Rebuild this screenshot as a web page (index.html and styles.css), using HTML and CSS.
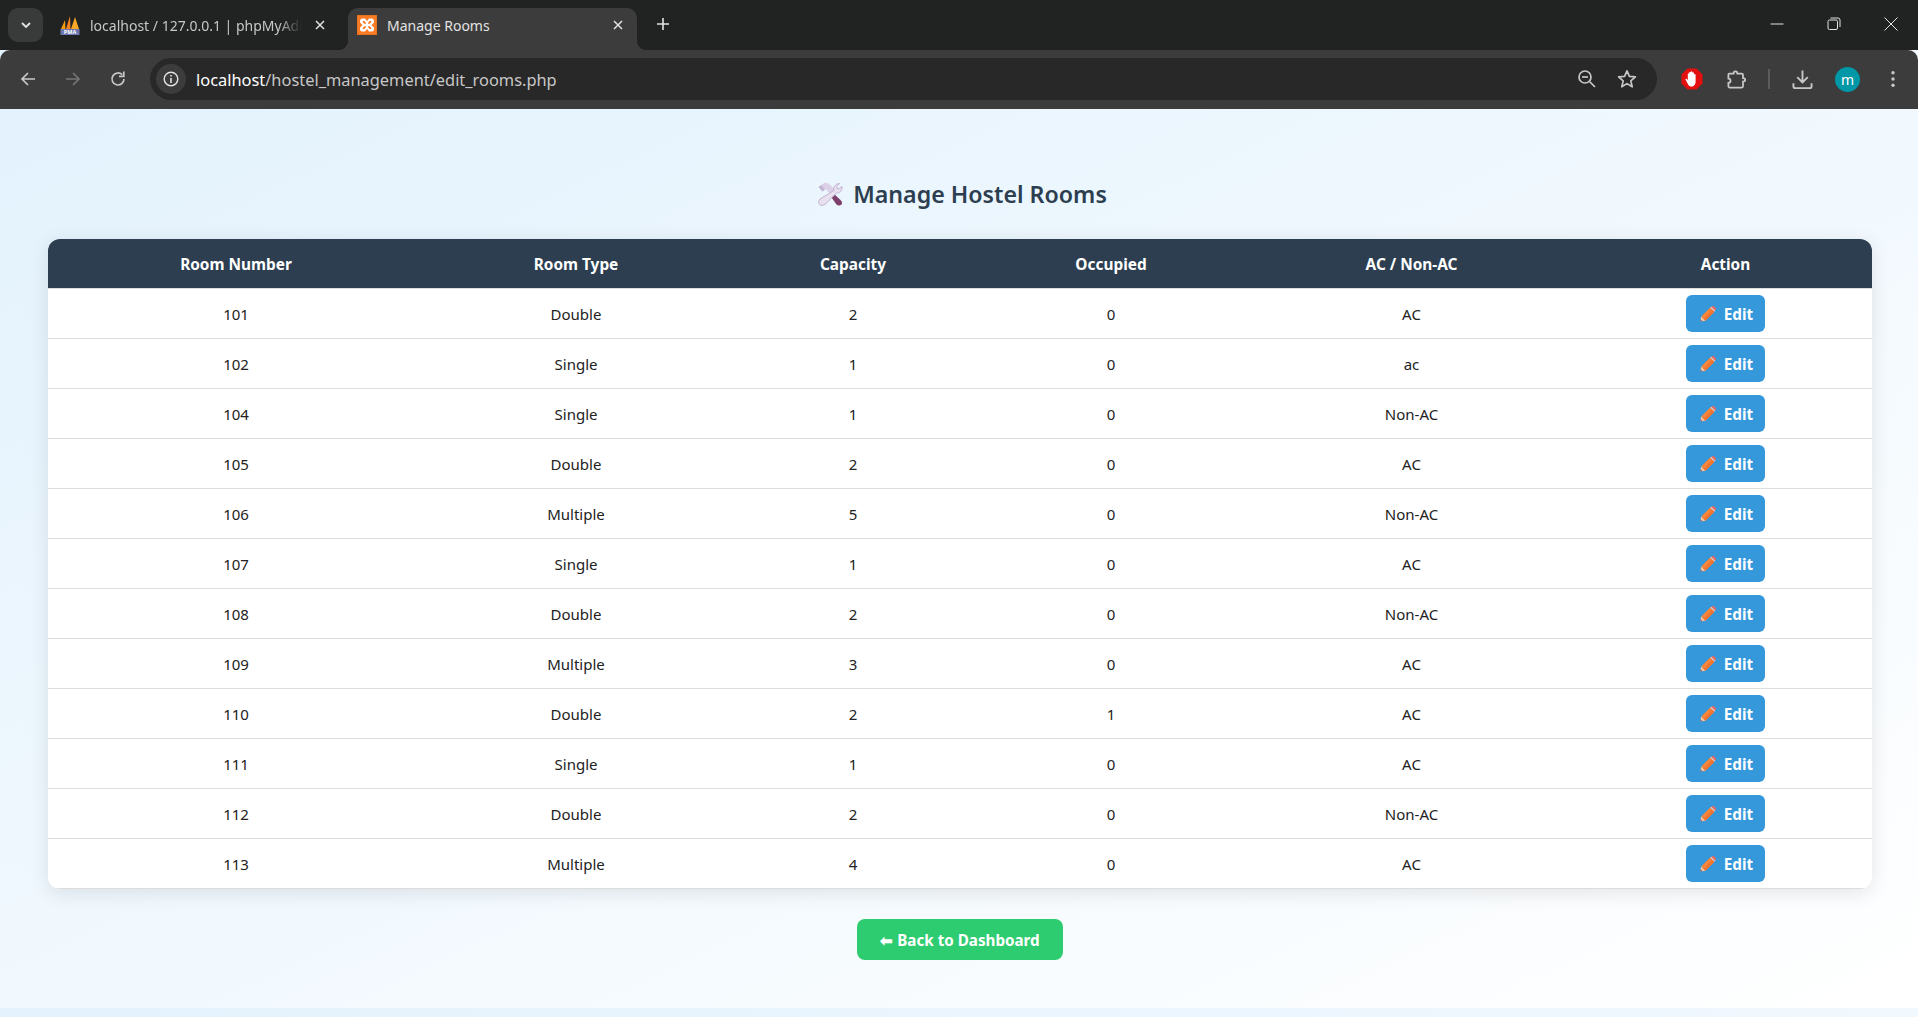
FILE: index.html
```html
<!DOCTYPE html>
<html lang="en">
<head>
    <meta charset="UTF-8">
    <meta name="viewport" content="width=device-width, initial-scale=1.0">
    <title>Manage Rooms</title>
    <link rel="stylesheet" href="styles.css">
</head>
<body>
    <svg class="sprite" width="0" height="0">
        <symbol id="pencil" viewBox="0 0 16 16">
            <path d="M0.4 15.6 L1.2 10.6 L5.4 14.8 Z" fill="#f7c9a0"/>
            <path d="M0.4 15.6 L0.8 13.4 L2.6 15.2 Z" fill="#7a4a78"/>
            <path d="M1.2 10.6 L10.2 1.6 L14.4 5.8 L5.4 14.8 Z" fill="#f8863a"/>
            <path d="M3.600 13 L12.2 3.600 L14.4 5.800 L5.400 14.800 Z" fill="#ef7430"/>
            <path d="M10.2 1.6 L11.4 0.8 L15.2 4.600 L14.4 5.800 Z" fill="#f1c6c0"/>
            <path d="M11.4 0.8 L12.4 0.2 C13 -0.1 13.5 0 14 0.4 L15.6 2 C16 2.500 16 3 15.8 3.600 L15.2 4.600 Z" fill="#f4645a"/>
        </symbol>
    </svg>

    <div class="tabstrip">
        <div class="tab-list"><svg width="14" height="14" viewBox="0 0 14 14"><path d="M3 5 L7 9 L11 5" fill="none" stroke="#e3e3e3" stroke-width="1.8"/></svg></div>
        <div class="tab">
            <svg class="favicon" viewBox="0 0 20 20">
                <path d="M1 14 L5 5 L5.5 14 Z" fill="#f89c0e"/>
                <path d="M6 14 L10 1 L10.5 14 Z" fill="#f58220"/>
                <path d="M11 14 L15 2 L19 14 Z" fill="#f9a825"/>
                <rect x="0.5" y="14" width="19" height="6" fill="#6c78af"/>
                <text x="10" y="19.4" class="pma-text">PMA</text>
            </svg>
            <span class="tab-title tab-title-long">localhost / 127.0.0.1 | phpMyAdmin</span>
            <svg class="tab-close" viewBox="0 0 12 12"><path d="M2 2 L10 10 M10 2 L2 10" stroke="#e3e3e3" stroke-width="1.5"/></svg>
        </div>
        <div class="tab tab-active">
            <svg class="favicon" viewBox="0 0 20 20">
                <rect width="20" height="20" fill="#e8701a"/>
                <rect x="0.8" y="0.8" width="18.4" height="18.4" fill="#fb7a24"/>
                <path d="M5 3.5 H8 L10 6 L12 3.5 H15 Q17 3.5 17 6 V7.5 L14.5 10 L17 12.5 V14 Q17 16.5 15 16.5 H12 L10 14 L8 16.5 H5 Q3 16.5 3 14 V12.5 L5.5 10 L3 7.5 V6 Q3 3.5 5 3.5 Z" fill="#fff"/>
                <path d="M6 6 H7.5 L9 8 V8.8 H7.5 L5.5 7 Z M14 6 H12.5 L11 8 V8.8 H12.5 L14.5 7 Z M6 14 H7.5 L9 12 V11.2 H7.5 L5.5 13 Z M14 14 H12.5 L11 12 V11.2 H12.5 L14.5 13 Z" fill="#fb7a24"/>
            </svg>
            <span class="tab-title">Manage Rooms</span>
            <svg class="tab-close" viewBox="0 0 12 12"><path d="M2 2 L10 10 M10 2 L2 10" stroke="#e3e3e3" stroke-width="1.5"/></svg>
        </div>
        <svg class="new-tab" viewBox="0 0 14 14"><path d="M7 1 V13 M1 7 H13" stroke="#e3e3e3" stroke-width="1.6"/></svg>
        <div class="window-controls">
            <svg viewBox="0 0 14 14"><path d="M0.5 7 H13.5" stroke="#e3e3e3"/></svg>
            <svg viewBox="0 0 14 14"><rect x="1" y="3" width="9.5" height="9.5" rx="1.5" fill="none" stroke="#e3e3e3"/><path d="M3.5 1 H11 Q13 1 13 3 V10" fill="none" stroke="#e3e3e3"/></svg>
            <svg viewBox="0 0 14 14"><path d="M0.5 0.5 L13.5 13.5 M13.5 0.5 L0.5 13.5" stroke="#e3e3e3"/></svg>
        </div>
    </div>

    <div class="toolbar">
        <div class="tool"><svg viewBox="0 0 18 18"><path d="M16 9 H3 M9 3 L3 9 L9 15" fill="none" stroke="#c7c7c7" stroke-width="1.7"/></svg></div>
        <div class="tool"><svg viewBox="0 0 18 18"><path d="M2 9 H15 M9 3 L15 9 L9 15" fill="none" stroke="#757575" stroke-width="1.7"/></svg></div>
        <div class="tool"><svg viewBox="0 0 18 18"><path d="M15 9 A6 6 0 1 1 13.2 4.7" fill="none" stroke="#c7c7c7" stroke-width="1.7"/><path d="M14.8 1.5 V6.3 H10" fill="none" stroke="#c7c7c7" stroke-width="1.7"/></svg></div>
        <div class="address-bar">
            <div class="site-info"><svg viewBox="0 0 16 16"><circle cx="8" cy="8" r="6.8" fill="none" stroke="#e3e3e3" stroke-width="1.4"/><path d="M8 7 V12 M8 4 V5.6" stroke="#e3e3e3" stroke-width="1.6"/></svg></div>
            <span class="url"><span class="url-host">localhost</span>/hostel_management/edit_rooms.php</span>
            <svg class="addr-icon" viewBox="0 0 20 20"><circle cx="8" cy="8" r="6" fill="none" stroke="#c7c7c7" stroke-width="1.7"/><path d="M5 8 H11" stroke="#c7c7c7" stroke-width="1.7"/><path d="M12.5 12.5 L18 18" stroke="#c7c7c7" stroke-width="1.7"/></svg>
            <svg class="addr-icon" viewBox="0 0 20 20"><path d="M10 1.8 L12.4 7.4 L18.4 7.9 L13.8 11.9 L15.2 17.8 L10 14.6 L4.8 17.8 L6.2 11.9 L1.6 7.9 L7.6 7.4 Z" fill="none" stroke="#c7c7c7" stroke-width="1.7" stroke-linejoin="round"/></svg>
        </div>
        <div class="tool"><svg class="adblock" viewBox="0 0 22 22"><path d="M6.5 0.5 H15.5 L21.5 6.5 V15.5 L15.5 21.5 H6.5 L0.5 15.5 V6.5 Z" fill="#e40f0f"/><path d="M7.4 17 L4.6 11.800 C4.200 10.800 5.400 10.300 6 11.200 L6.800 12.400 V6 C6.800 5 8.200 5 8.200 6 V10 V4.400 C8.200 3.400 9.800 3.400 9.800 4.400 V10 V4 C9.800 3 11.400 3 11.400 4 V10 V5 C11.400 4 13 4 13 5 V10 V6.800 C13 5.800 14.600 5.800 14.600 6.800 V13.500 C14.600 16 13.400 18 11.600 18.400 H9.600 C8.600 18.400 8 17.800 7.400 17 Z" fill="#fff"/></svg></div>
        <div class="tool"><svg class="puzzle" viewBox="0 0 20 20"><path d="M3 4.5 H7.2 C7.2 1.6 10.8 1.6 10.8 4.5 H15 A1.2 1.2 0 0 1 16.2 5.7 V8.6 C19 8.6 19 12 16.2 12 V16.5 A1.2 1.2 0 0 1 15 17.7 H3.5 A1.2 1.2 0 0 1 2.3 16.5 V13.2 C5 13 5 9.4 2.3 9.2 V5.2 A0.8 0.8 0 0 1 3 4.5 Z" fill="none" stroke="#c7c7c7" stroke-width="1.7"/></svg></div>
        <div class="tool-sep"></div>
        <div class="tool"><svg class="download" viewBox="0 0 22 22"><path d="M11 1.5 V14 M5.5 8.5 L11 14 L16.5 8.5" fill="none" stroke="#c7c7c7" stroke-width="2"/><path d="M1.5 15 V18 Q1.5 20 3.5 20 H18.5 Q20.5 20 20.5 18 V15" fill="none" stroke="#c7c7c7" stroke-width="2"/></svg></div>
        <div class="tool"><span class="avatar">m</span></div>
        <div class="tool"><svg viewBox="0 0 18 18"><circle cx="9" cy="2.8" r="1.7" fill="#c7c7c7"/><circle cx="9" cy="9" r="1.7" fill="#c7c7c7"/><circle cx="9" cy="15.2" r="1.7" fill="#c7c7c7"/></svg></div>
    </div>

    <div class="page">
        <h2 class="page-title">
            <svg class="title-icon" viewBox="0 0 26 24">
                <path d="M12 12 L19.500 22.500 Q22 24.500 24.500 22.500 Q26 20.500 23.500 18 L15 10 Z" fill="#7d3f6b"/>
                <path d="M1.500 5 L8 0.500 L11.500 1.500 L17.500 7 L13.500 12 L8.500 7 L5.500 9.500 Z" fill="#dcd0e6"/>
                <path d="M1.500 5 L5.500 9.500 L8 7.500 L4.500 3 Z" fill="#c4b5d3"/>
                <path d="M17 8.500 C16 5 18.500 1.500 22.500 1.500 L19.500 5 L21 7.200 L25 4.500 C25.500 8.500 22.500 11.500 19.500 11 L8.500 22 C6.500 23.500 4 24 2.500 22.500 C1 20.500 1.500 18.500 3 17 Z" fill="#e9e0ef" stroke="#b7a6c6" stroke-width="0.800"/>
            </svg>
            Manage Hostel Rooms
        </h2>

        <div class="table-card">
            <table class="rooms-table">
                <thead>
                    <tr>
                        <th class="col-number">Room Number</th>
                        <th class="col-type">Room Type</th>
                        <th class="col-capacity">Capacity</th>
                        <th class="col-occupied">Occupied</th>
                        <th class="col-ac">AC / Non-AC</th>
                        <th>Action</th>
                    </tr>
                </thead>
                <tbody>
                    <tr><td>101</td><td>Double</td><td>2</td><td>0</td><td>AC</td><td><a class="edit-btn" href="#"><svg class="pencil-icon"><use href="#pencil"/></svg>Edit</a></td></tr>
                    <tr><td>102</td><td>Single</td><td>1</td><td>0</td><td>ac</td><td><a class="edit-btn" href="#"><svg class="pencil-icon"><use href="#pencil"/></svg>Edit</a></td></tr>
                    <tr><td>104</td><td>Single</td><td>1</td><td>0</td><td>Non-AC</td><td><a class="edit-btn" href="#"><svg class="pencil-icon"><use href="#pencil"/></svg>Edit</a></td></tr>
                    <tr><td>105</td><td>Double</td><td>2</td><td>0</td><td>AC</td><td><a class="edit-btn" href="#"><svg class="pencil-icon"><use href="#pencil"/></svg>Edit</a></td></tr>
                    <tr><td>106</td><td>Multiple</td><td>5</td><td>0</td><td>Non-AC</td><td><a class="edit-btn" href="#"><svg class="pencil-icon"><use href="#pencil"/></svg>Edit</a></td></tr>
                    <tr><td>107</td><td>Single</td><td>1</td><td>0</td><td>AC</td><td><a class="edit-btn" href="#"><svg class="pencil-icon"><use href="#pencil"/></svg>Edit</a></td></tr>
                    <tr><td>108</td><td>Double</td><td>2</td><td>0</td><td>Non-AC</td><td><a class="edit-btn" href="#"><svg class="pencil-icon"><use href="#pencil"/></svg>Edit</a></td></tr>
                    <tr><td>109</td><td>Multiple</td><td>3</td><td>0</td><td>AC</td><td><a class="edit-btn" href="#"><svg class="pencil-icon"><use href="#pencil"/></svg>Edit</a></td></tr>
                    <tr><td>110</td><td>Double</td><td>2</td><td>1</td><td>AC</td><td><a class="edit-btn" href="#"><svg class="pencil-icon"><use href="#pencil"/></svg>Edit</a></td></tr>
                    <tr><td>111</td><td>Single</td><td>1</td><td>0</td><td>AC</td><td><a class="edit-btn" href="#"><svg class="pencil-icon"><use href="#pencil"/></svg>Edit</a></td></tr>
                    <tr><td>112</td><td>Double</td><td>2</td><td>0</td><td>Non-AC</td><td><a class="edit-btn" href="#"><svg class="pencil-icon"><use href="#pencil"/></svg>Edit</a></td></tr>
                    <tr><td>113</td><td>Multiple</td><td>4</td><td>0</td><td>AC</td><td><a class="edit-btn" href="#"><svg class="pencil-icon"><use href="#pencil"/></svg>Edit</a></td></tr>
                </tbody>
            </table>
        </div>

        <div class="back-row">
            <a class="back-btn" href="#">⬅ Back to Dashboard</a>
        </div>
    </div>
</body>
</html>
```

FILE: styles.css
```css
* {
    box-sizing: border-box;
}
html, body {
    height: 100%;
}
body {
    margin: 0;
    font-family: 'Noto Sans', Arial, sans-serif;
    background: linear-gradient(to right, #e3f2fd, #f1f8fe);
    overflow: hidden;
}
.sprite {
    display: block;
    height: 0;
}

/* browser top */
.tabstrip {
    display: flex;
    align-items: flex-end;
    height: 50px;
    background-color: #202322;
}
.tab-list {
    display: flex;
    align-items: center;
    justify-content: center;
    width: 35px;
    height: 34px;
    margin: 0 0 8px 8px;
    background-color: #393a3a;
    border-radius: 10px;
}
.tab {
    display: flex;
    align-items: center;
    width: 300px;
    height: 42px;
    margin-left: 5px;
    padding: 0 22px 8px 12px;
    color: #c7c7c7;
    font-size: 14px;
    border-radius: 10px 10px 0 0;
}
.tab + .tab {
    margin-left: 0;
}
.tab-active {
    position: relative;
    width: 289px;
    padding: 0 13px 8px 9px;
    color: #e3e3e3;
    background-color: #3c3c3c;
}
.tab-active::before,
.tab-active::after {
    content: "";
    position: absolute;
    bottom: 0;
    width: 10px;
    height: 10px;
}
.tab-active::before {
    left: -10px;
    background: radial-gradient(circle at 0 0, #202322 10px, #3c3c3c 10.5px);
}
.tab-active::after {
    right: -10px;
    background: radial-gradient(circle at 100% 0, #202322 10px, #3c3c3c 10.5px);
}
.favicon {
    flex: none;
    width: 20px;
    height: 20px;
    margin-right: 10px;
}
.pma-text {
    fill: #fff;
    font-size: 5.5px;
    font-weight: 700;
    text-anchor: middle;
}
.tab-title {
    flex: 1;
    min-width: 0;
    white-space: nowrap;
}
.tab-title-long {
    overflow: hidden;
    -webkit-mask-image: linear-gradient(to left, transparent 0, #000 24px);
    mask-image: linear-gradient(to left, transparent 0, #000 24px);
}
.tab-close {
    flex: none;
    width: 12px;
    height: 12px;
    margin-left: 12px;
}
.new-tab {
    width: 14px;
    height: 14px;
    margin: 0 0 19px 19px;
}
.window-controls {
    display: flex;
    align-items: center;
    gap: 43px;
    margin: 0 20px 19px auto;
}
.window-controls svg {
    width: 14px;
    height: 14px;
}

.toolbar {
    display: flex;
    align-items: center;
    height: 59px;
    padding: 0 3px 1px 5px;
    background-color: #3c3c3c;
    border-radius: 10px 10px 0 0;
}
.tool {
    display: flex;
    align-items: center;
    justify-content: center;
    flex: none;
    width: 45px;
}
.tool svg {
    width: 18px;
    height: 18px;
}
.tool .adblock {
    width: 22px;
    height: 22px;
}
.tool .puzzle {
    width: 21px;
    height: 21px;
}
.tool .download {
    width: 21px;
    height: 21px;
}
.tool-sep {
    flex: none;
    width: 2px;
    height: 20px;
    margin: 0 10px 0 9px;
    background-color: #5c5c5c;
}
.avatar {
    display: flex;
    align-items: center;
    justify-content: center;
    width: 25px;
    height: 25px;
    color: #fff;
    font-size: 14px;
    background-color: #0097a7;
    border-radius: 50%;
}
.address-bar {
    display: flex;
    align-items: center;
    flex: 1;
    height: 42px;
    margin: 0 12px 0 10px;
    padding: 0 20px 0 6px;
    background-color: #282828;
    border-radius: 21px;
}
.site-info {
    display: flex;
    align-items: center;
    justify-content: center;
    width: 30px;
    height: 30px;
    background-color: #3c3c3c;
    border-radius: 50%;
}
.site-info svg {
    width: 16px;
    height: 16px;
}
.url {
    flex: 1;
    margin-left: 10px;
    padding-top: 1px;
    color: #c7c7c7;
    font-size: 16.4px;
}
.url-host {
    color: #fff;
}
.addr-icon {
    width: 20px;
    height: 20px;
    margin-left: 20px;
}

/* page */
.page {
    padding: 61px 46px 48px 48px;
    background: linear-gradient(to bottom right, #e3f2fd, #ffffff);
}
.page-title {
    display: flex;
    align-items: center;
    justify-content: center;
    gap: 10px;
    height: 48px;
    margin: 0 0 21px 4px;
    color: #2c3e50;
    font-size: 23.2px;
    font-weight: 600;
}
.title-icon {
    width: 26px;
    height: 24px;
}
.table-card {
    background-color: white;
    border-radius: 12px;
    box-shadow: 0 4px 20px rgba(0,0,0,0.1);
    overflow: hidden;
}
.rooms-table {
    width: 100%;
    border-collapse: collapse;
    table-layout: fixed;
    font-size: 15px;
    text-align: center;
}
.rooms-table th {
    height: 49px;
    padding: 2px 0 0 0;
    color: white;
    font-size: 15.4px;
    font-weight: 700;
    background-color: #2c3e50;
    border-bottom: 1px solid #ddd;
}
.rooms-table td {
    height: 50px;
    padding: 2px 0 0 0;
    color: #222;
    border-bottom: 1px solid #ddd;
}
.rooms-table td:last-child {
    padding-top: 0;
}
.col-number {
    width: 376px;
}
.col-type {
    width: 304px;
}
.col-capacity {
    width: 250px;
}
.col-occupied {
    width: 266px;
}
.col-ac {
    width: 335px;
}
.edit-btn {
    display: inline-flex;
    align-items: center;
    gap: 8px;
    height: 37px;
    padding: 1px 12px 0 14px;
    color: white;
    font-size: 15.3px;
    font-weight: 700;
    text-decoration: none;
    background-color: #3498db;
    border-radius: 6px;
    vertical-align: middle;
}
.pencil-icon {
    width: 16px;
    height: 16px;
}
.back-row {
    display: flex;
    justify-content: center;
    margin-top: 30px;
}
.back-btn {
    display: flex;
    align-items: center;
    height: 41px;
    padding: 2px 23px 0 23px;
    color: white;
    font-size: 15.2px;
    font-weight: 700;
    text-decoration: none;
    background-color: #2ecc71;
    border-radius: 8px;
}
```
